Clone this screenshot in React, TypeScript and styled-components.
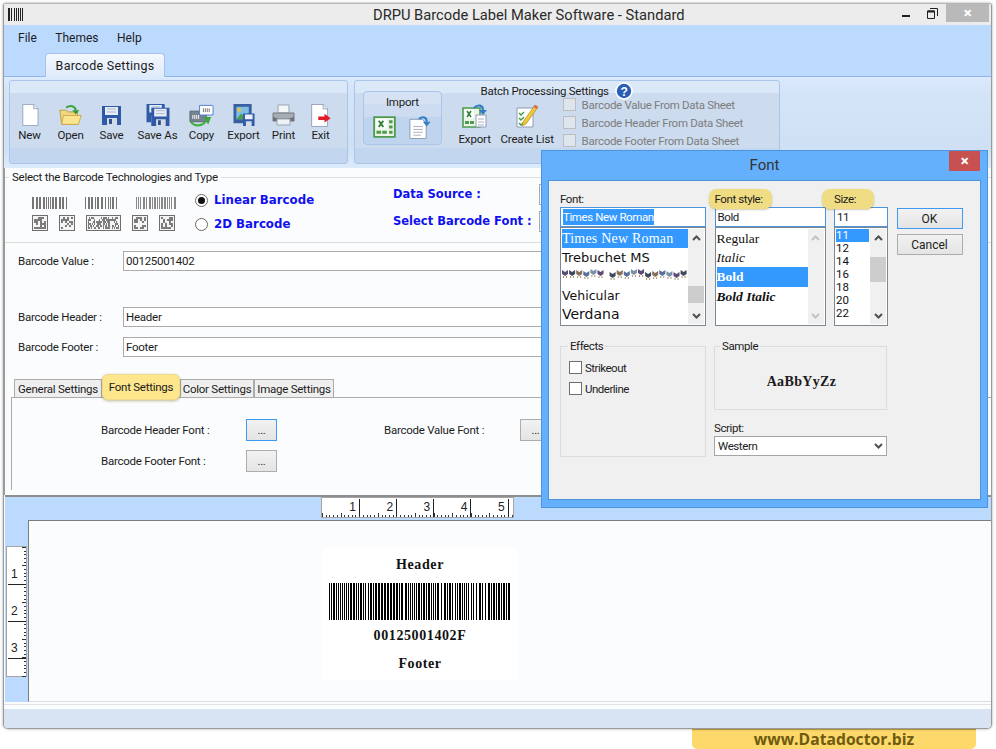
import React from "react";
import styled, { createGlobalStyle } from "styled-components";

const UI = `Roboto, "Open Sans", sans-serif`;
const SERIF = `"Liberation Serif", serif`;
const WIDE = `"DejaVu Sans", sans-serif`;

const GlobalStyle = createGlobalStyle`
  html, body { margin: 0; padding: 0; background: #fff; }
  #root { width: 996px; height: 749px; overflow: hidden; }
  * { box-sizing: border-box; }
`;

const Page = styled.div`
  width: 996px;
  height: 749px;
  padding: 3px 4px 0 3px;
  font-family: ${UI};
  font-size: 11.5px;
  letter-spacing: -0.25px;
  color: #1c1c1c;
`;
const Window = styled.div`
  position: relative;
  width: 989px;
  height: 726px;
  display: flex;
  flex-direction: column;
  border: 1px solid #9a9a9a;
  border-top-color: #b5b5b5;
  border-radius: 3px 3px 5px 5px;
  background: #fbfcfe;
  box-shadow: 0 0 3px rgba(0, 0, 0, 0.35);
  overflow: hidden;
`;
const TitleBar = styled.div`
  height: 21px;
  flex: none;
  display: flex;
  align-items: center;
  padding-left: 4px;
  background: #ececec;
`;
const Title = styled.div`
  margin-left: 349px;
  font-size: 14.7px;
  letter-spacing: 0;
  color: #2a2a2a;
`;
const Controls = styled.div`
  margin-left: auto;
  display: flex;
  align-items: flex-start;
  height: 100%;
`;
const CtlButton = styled.div`
  width: 26px;
  height: 18px;
  display: flex;
  align-items: center;
  justify-content: center;
`;
const CloseCtl = styled.div`
  width: 43px;
  height: 18px;
  margin-left: 1px;
  margin-right: 2px;
  background: #b9b9b9;
  color: #fff;
  font-size: 15px;
  font-weight: 700;
  display: flex;
  align-items: center;
  justify-content: center;
`;
const Band = styled.div`
  height: 52px;
  flex: none;
  background: #bcd9fe;
  border-bottom: 1px solid #8fb5ea;
  position: relative;
`;
const MenuBar = styled.div`
  display: flex;
  gap: 18.5px;
  padding: 0 0 0 14px;
  font-size: 12px;
  letter-spacing: 0;
  height: 25px;
  align-items: center;
`;
const RibbonTab = styled.div`
  margin: 3px 0 0 41px;
  width: 120px;
  height: 24px;
  border: 1px solid #a9bff0;
  border-bottom: none;
  border-radius: 4px 4px 0 0;
  background: linear-gradient(#f4f8fe, #dfeafa);
  font-size: 12.5px;
  display: flex;
  align-items: center;
  justify-content: center;
  letter-spacing: 0.25px;
`;
const Ribbon = styled.div`
  height: 91px;
  flex: none;
  display: flex;
  gap: 6px;
  padding: 3px 0 4px 5px;
  background: linear-gradient(#dbeafc 0, #d5e5f8 14px, #cfe0f4 70px, #dcebfb 100%);
`;
const RibbonGroup = styled.div<{ $w: number }>`
  width: ${(p) => p.$w}px;
  height: 84px;
  flex: none;
  display: flex;
  border: 1px solid #a9c6ea;
  border-radius: 3px;
  background: linear-gradient(#dbe8f8 0 12px, #ccdbee 12px 67px, #c2d6ef 67px);
`;
const ToolRow = styled.div`
  display: flex;
  padding: 22px 0 0 0;
  margin-left: -1px;
`;
const Tool = styled.div<{ $w?: number; $gap?: number }>`
  width: ${(p) => (p.$w ? `${p.$w}px` : "auto")};
  display: flex;
  flex-direction: column;
  align-items: center;
  gap: ${(p) => p.$gap ?? 1}px;
  line-height: 15px;
  font-size: 11.5px;
  letter-spacing: -0.15px;
  white-space: nowrap;
`;
const IconSlot = styled.div`
  height: 24px;
  display: flex;
  align-items: center;
  justify-content: center;
`;
const ImportBox = styled.div`
  width: 79px;
  height: 54px;
  margin: 10px 0 0 8px;
  border: 1px solid #a9c6ea;
  border-radius: 4px;
  background: linear-gradient(#d4e2f3 0 12px, #cddcf0 12px 25px, #bfd4ee 25px);
  display: flex;
  flex-direction: column;
  align-items: center;
`;
const ImportLabel = styled.div`
  line-height: 20px;
`;
const ImportIcons = styled.div`
  display: flex;
  gap: 12px;
  margin-top: 4px;
`;
const Batch = styled.div`
  margin-left: 19px;
  width: 320px;
  display: flex;
  flex-direction: column;
`;
const BatchHead = styled.div`
  display: flex;
  align-items: center;
  gap: 6px;
  margin: 1px 0 0 20px;
  height: 18px;
`;
const BatchBody = styled.div`
  display: flex;
`;
const BatchTools = styled.div`
  display: flex;
  gap: 13px;
  padding-top: 4px;
  margin-right: 10px;
`;
const Checks = styled.div`
  display: flex;
  flex-direction: column;
  gap: 5px;
  margin-top: -2px;
`;
const GhostCheck = styled.div`
  display: flex;
  align-items: center;
  gap: 6px;
  height: 13px;
  color: #7d7d7d;
  letter-spacing: -0.3px;
  white-space: nowrap;
`;
const GhostBox = styled.span`
  width: 13px;
  height: 13px;
  border: 1px solid #bdbdbd;
  background: #dfe5ec;
`;
const Form = styled.div`
  height: 327px;
  flex: none;
  display: flex;
  flex-direction: column;
  border-left: 1px solid #9a9a9a;
  background: #fbfcfe;
`;
const TechSet = styled.fieldset`
  margin: 2px 0 0;
  padding: 0 0 0 27px;
  height: 73px;
  flex: none;
  border: 0;
  border-top: 1px solid #dcdcdc;
  border-bottom: 1px solid #dcdcdc;
  display: flex;
  position: relative;
`;
const TechLegend = styled.legend`
  padding: 0 3px;
  margin-left: -23px;
  line-height: 15px;
`;
const TechBody = styled.div`
  display: flex;
  align-items: flex-start;
`;
const Thumbs = styled.div`
  width: 146px;
  flex: none;
  display: flex;
  flex-direction: column;
  gap: 6px;
  margin-top: 12px;
`;
const ThumbRow = styled.div<{ $gap: number }>`
  display: flex;
  gap: ${(p) => p.$gap}px;
`;
const RadioCol = styled.div`
  margin: 8px 0 0 17px;
  width: 198px;
  flex: none;
  display: flex;
  flex-direction: column;
  gap: 10px;
`;
const RadioRow = styled.div`
  display: flex;
  align-items: center;
  gap: 6px;
  height: 14px;
  color: #1010ee;
  font-family: ${WIDE};
  font-weight: 700;
  font-size: 11.8px;
  letter-spacing: 0;
`;
const Radio = styled.span<{ $on?: boolean }>`
  width: 13px;
  height: 13px;
  border-radius: 50%;
  border: 1px solid #6b6b6b;
  background: #fff;
  display: flex;
  align-items: center;
  justify-content: center;
  &::after {
    content: "";
    width: 7px;
    height: 7px;
    border-radius: 50%;
    background: ${(p) => (p.$on ? "#111" : "transparent")};
  }
`;
const SourceCol = styled.div`
  display: flex;
  flex-direction: column;
  gap: 7px;
  margin-top: -1px;
`;
const SourceRow = styled.div`
  display: flex;
  align-items: center;
  height: 20px;
`;
const SourceLabel = styled.div`
  width: 146px;
  flex: none;
  color: #1010ee;
  font-family: ${WIDE};
  font-weight: 700;
  font-size: 11.5px;
  letter-spacing: 0;
`;
const Combo = styled.div`
  width: 240px;
  height: 21px;
  border: 1px solid #aaa;
  background: #fff;
`;
const FieldRows = styled.div`
  padding: 8px 0 0 13px;
  display: flex;
  flex-direction: column;
`;
const FieldRow = styled.div<{ $after: number }>`
  display: flex;
  align-items: center;
  height: 20px;
  margin-bottom: ${(p) => p.$after}px;
`;
const FieldLabel = styled.div`
  width: 105px;
  flex: none;
`;
const FieldInput = styled.input`
  width: 700px;
  height: 20px;
  border: 1px solid #ababab;
  background: #fff;
  padding: 0 2px;
  font: 11.5px ${UI};
  letter-spacing: -0.25px;
  color: #1c1c1c;
`;
const TabRow = styled.div`
  position: relative;
  display: flex;
  height: 19px;
  margin: 21px 0 0 9px;
  flex: none;
  align-items: flex-end;
`;
const SmallTab = styled.div<{ $w: number; $hot?: boolean }>`
  width: ${(p) => p.$w}px;
  height: ${(p) => (p.$hot ? 26 : 18)}px;
  margin-bottom: ${(p) => (p.$hot ? -3 : 0)}px;
  position: relative;
  z-index: ${(p) => (p.$hot ? 1 : 0)};
  display: flex;
  align-items: ${(p) => (p.$hot ? "flex-start" : "center")};
  padding-top: ${(p) => (p.$hot ? 5 : 0)}px;
  justify-content: center;
  white-space: nowrap;
  border: 1px solid ${(p) => (p.$hot ? "#f0d98a" : "#ababab")};
  border-bottom: ${(p) => (p.$hot ? "1px solid #f0d98a" : "none")};
  border-radius: ${(p) => (p.$hot ? "6px" : "0")};
  background: ${(p) => (p.$hot ? "#fde68c" : "#efefef")};
  box-shadow: ${(p) => (p.$hot ? "0 1px 3px rgba(120,100,20,.45)" : "none")};
`;
const TabPanel = styled.div`
  margin-left: 6px;
  height: 93px;
  flex: none;
  border-left: 1px solid #ababab;
  border-top: 1px solid #ababab;
  display: grid;
  grid-template-columns: 145px 138px 136px 1fr;
  grid-template-rows: 22px 22px;
  row-gap: 9px;
  padding: 21px 0 0 89px;
  align-items: center;
`;
const FontLabel = styled.div``;
const DotButton = styled.div<{ $focus?: boolean }>`
  width: 31px;
  height: 22px;
  border: 1px solid ${(p) => (p.$focus ? "#3c9af0" : "#adadad")};
  background: linear-gradient(#f2f2f2, #e4e4e4);
  display: flex;
  align-items: center;
  justify-content: center;
  font-size: 11px;
`;
const Preview = styled.div`
  flex: 1;
  display: grid;
  grid-template-columns: 23px 1fr;
  grid-template-rows: 23px 1fr;
  background: #bcd9fe;
  border-top: 2px solid #8d8d8d;
  margin-left: 1px;
`;
const TopRulerCell = styled.div`
  grid-column: 2;
  padding-left: 293px;
  line-height: 0;
`;
const SideRulerCell = styled.div`
  padding: 26px 0 0 1px;
  line-height: 0;
`;
const Canvas = styled.div`
  border-left: 1.5px solid #7d7d7d;
  border-top: 1.5px solid #7d7d7d;
  border-bottom: 1px solid #dedede;
  background: #fbfcfe;
  padding: 27px 0 0 293px;
`;
const LabelCard = styled.div`
  width: 196px;
  height: 132px;
  background: #fff;
  display: flex;
  flex-direction: column;
  align-items: center;
  font-family: ${SERIF};
  font-weight: 700;
  font-size: 14px;
  letter-spacing: 0.6px;
  color: #111;
`;
const CardLine = styled.div<{ $top: number }>`
  margin-top: ${(p) => p.$top}px;
  line-height: 16px;
`;
const CardBars = styled.div`
  margin-top: 10px;
  line-height: 0;
`;
const Divider = styled.div`
  height: 5px;
  flex: none;
  margin-top: 2px;
  border-top: 1px solid #e2e2e2;
  background: #fbfcfe;
`;
const Status = styled.div`
  height: 19px;
  flex: none;
  background: #d8e3f3;
`;
const Badge = styled.div`
  margin-left: 689px;
  width: 284px;
  height: 20px;
  background: #fcd96a;
  border-radius: 0 0 5px 5px;
  border-top: 1px solid #c9a63d;
  color: #6f5a10;
  font: 700 15.7px "Open Sans", sans-serif;
  letter-spacing: 0;
  line-height: 18px;
  text-align: center;
`;
const Dialog = styled.div`
  position: absolute;
  left: 537px;
  top: 146px;
  width: 447px;
  height: 358px;
  border: 1px solid #4d94dc;
  background: #64b0fd;
  padding: 29px 6px 7px 6px;
  z-index: 5;
`;
const DialogTitle = styled.div`
  position: absolute;
  left: 0;
  right: 0;
  top: 5px;
  text-align: center;
  font-size: 15px;
  letter-spacing: 0;
  color: #333;
`;
const DialogClose = styled.div`
  position: absolute;
  right: 7px;
  top: 0;
  width: 31px;
  height: 20px;
  background: #c75050;
  color: #fff;
  font-size: 15px;
  font-weight: 700;
  display: flex;
  align-items: center;
  justify-content: center;
`;
const DialogBody = styled.div`
  width: 100%;
  height: 100%;
  background: #f0f0f0;
  border: 1px solid #4d94dc;
  padding: 10px 0 0 11px;
  display: grid;
  grid-template-columns: 146px 111px 54px 66px;
  column-gap: 8.5px;
  grid-template-rows: 16px 20px 98px;
  align-content: start;
  letter-spacing: -0.4px;
`;
const DLabel = styled.div<{ $hot?: boolean; $ml?: number; $w?: number }>`
  position: relative;
  line-height: 16px;
  white-space: nowrap;
  z-index: 1;
  ${(p) =>
    p.$hot
      ? `
    margin: -2px 0 -2px ${p.$ml}px;
    width: ${p.$w}px;
    padding: 2px 0 2px ${-(p.$ml ?? 0)}px;
    background: #f0dc82;
    border-radius: 8px;
    box-shadow: 0 1px 2px rgba(120,100,20,.35);
  `
      : ""}
`;
const DInput = styled.div`
  height: 20px;
  border: 1px solid #4d94dc;
  background: #fff;
  padding-left: 2px;
  line-height: 18px;
`;
const Selected = styled.span`
  background: #3399ff;
  color: #fff;
  padding: 1px 0;
`;
const ListBox = styled.div`
  height: 99px;
  border: 1px solid #7d8891;
  background: #fff;
  display: flex;
  padding: 1px;
  overflow: hidden;
`;
const ListItems = styled.div`
  flex: 1;
  min-width: 0;
  display: flex;
  flex-direction: column;
`;
const ListItem = styled.div<{ $on?: boolean; $h: number; $font?: string; $size: number; $ls?: number; $w?: number; $b?: boolean; $i?: boolean }>`
  height: ${(p) => p.$h}px;
  line-height: ${(p) => p.$h}px;
  flex: none;
  width: ${(p) => (p.$w ? `${p.$w}px` : "100%")};
  font-family: ${(p) => p.$font ?? UI};
  font-size: ${(p) => p.$size}px;
  letter-spacing: ${(p) => p.$ls ?? 0}px;
  font-weight: ${(p) => (p.$b ? 700 : 400)};
  font-style: ${(p) => (p.$i ? "italic" : "normal")};
  background: ${(p) => (p.$on ? "#3399ff" : "transparent")};
  color: ${(p) => (p.$on ? "#fff" : "#111")};
  white-space: nowrap;
`;
const ScrollBar = styled.div`
  width: 16px;
  flex: none;
  background: #f0f0f0;
  display: flex;
  flex-direction: column;
  justify-content: space-between;
  align-items: center;
  position: relative;
  padding: 6px 0 5px;
`;
const Thumb = styled.div<{ $top: number; $h: number }>`
  position: absolute;
  left: 0;
  right: 0;
  top: ${(p) => p.$top}px;
  height: ${(p) => p.$h}px;
  background: #cdcdcd;
`;
const DialogButtons = styled.div`
  grid-column: 4;
  grid-row: 1 / span 3;
  padding-top: 17px;
  display: flex;
  flex-direction: column;
  gap: 5px;
  letter-spacing: 0;
`;
const DButton = styled.div<{ $def?: boolean }>`
  height: 21px;
  border: 1px solid ${(p) => (p.$def ? "#3c9af0" : "#adadad")};
  background: linear-gradient(#f2f2f2, #e4e4e4);
  display: flex;
  align-items: center;
  justify-content: center;
  font-size: 12px;
`;
const LowerRow = styled.div`
  grid-column: 1 / span 3;
  display: grid;
  grid-template-columns: 146px 173px;
  column-gap: 8px;
  margin-top: 13px;
`;
const GroupSet = styled.fieldset<{ $h: number; $pad: number }>`
  margin: 0;
  padding: 0 0 0 ${(p) => p.$pad}px;
  height: ${(p) => p.$h}px;
  border: 1px solid #dcdcdc;
  min-width: 0;
`;
const GroupLegend = styled.legend<{ $ml: number }>`
  padding: 0 2px;
  margin-left: ${(p) => p.$ml}px;
  line-height: 16px;
`;
const EffectRow = styled.div`
  display: flex;
  align-items: center;
  gap: 3px;
  height: 13px;
  margin-top: 8px;
  letter-spacing: -0.5px;
  &:first-of-type {
    margin-top: 7px;
  }
`;
const Box = styled.span`
  width: 13px;
  height: 13px;
  border: 1px solid #6e6e6e;
  background: #fff;
`;
const SampleText = styled.div`
  text-align: center;
  padding: 20px 0 0 2px;
  font: 700 14px ${SERIF};
  letter-spacing: 0.35px;
`;
const ScriptLabel = styled.div`
  line-height: 16px;
  margin-top: 10px;
`;
const ScriptCombo = styled.div`
  height: 20px;
  border: 1px solid #a5a5a5;
  background: #fff;
  display: flex;
  align-items: center;
  justify-content: space-between;
  padding: 0 3px;
`;

/* ---------- drawings ---------- */
function rng(seed: number) {
  let s = seed * 7919 + 13;
  return () => {
    s = (s * 9301 + 49297) % 233280;
    return s / 233280;
  };
}
function barPattern(seed: number, total: number, gapBias: number) {
  const out: { x: number; w: number }[] = [];
  const next = rng(seed);
  let x = 0;
  while (x < total) {
    const w = next() > 0.6 ? 2 : 1;
    out.push({ x, w: Math.min(w, total - x) });
    x += w + (next() > gapBias ? 2 : 1);
  }
  return out;
}
const Bars = ({ w, h, seed, color = "#000", gapBias = 0.7 }: { w: number; h: number; seed: number; color?: string; gapBias?: number }) => (
  <svg width={w} height={h} shapeRendering="crispEdges">
    {barPattern(seed, w, gapBias).map((b, i) => (
      <rect key={i} x={b.x} y={0} width={b.w} height={h} fill={color} />
    ))}
  </svg>
);
const Matrix = ({ w, h, seed, stacked }: { w: number; h: number; seed: number; stacked?: boolean }) => {
  const next = rng(seed);
  const cells: React.ReactNode[] = [];
  for (let y = 2; y < h - 2; y += 2)
    for (let x = 2; x < w - 2; x += stacked ? 1 : 2) {
      const on = next() > 0.42;
      if (on) cells.push(<rect key={`${x}-${y}`} x={x} y={y} width={stacked ? 1 : 2} height={2} fill="#7c7c7c" />);
    }
  return (
    <svg width={w} height={h} shapeRendering="crispEdges">
      <rect x={0.5} y={0.5} width={w - 1} height={h - 1} fill="#f4f4f4" stroke="#6f6f6f" />
      {cells}
    </svg>
  );
};
const PageShape = () => <path d="M1.5 .5h13l5 5v20h-18z" fill="#fff" stroke="#8f9bb5" />;
const PageFold = () => <path d="M14.5 .5v5h5" fill="#e9edf5" stroke="#8f9bb5" />;
const NewIcon = () => (
  <svg width="20" height="22" viewBox="0 0 20 26">
    <PageShape />
    <PageFold />
  </svg>
);
const OpenIcon = () => (
  <svg width="23" height="23" viewBox="0 0 26 24">
    <path d="M1 6h7l2 2h11v14H3z" fill="#f0d680" stroke="#b99a3a" />
    <path d="M5 12h20l-3 10H3z" fill="#fbe68f" stroke="#c9a845" />
    <path d="M8 3c5-3 10-2 11 3" fill="none" stroke="#3aa53a" strokeWidth="2.4" />
    <path d="M15 6h8l-4 5z" fill="#2f9c2f" />
  </svg>
);
const Floppy = ({ x = 0, y = 0 }: { x?: number; y?: number }) => (
  <g transform={`translate(${x} ${y})`}>
    <path d="M0 0h19v19H0z" fill="#2f5aa8" />
    <path d="M3 1h13v8H3z" fill="#e8edf6" />
    <path d="M5 3h9M5 6h9" stroke="#a9b7d3" />
    <path d="M5 12h10v7H5z" fill="#d5dbe6" />
    <path d="M7 13h3v5H7z" fill="#2f4f8f" />
  </g>
);
const SaveIcon = () => (
  <svg width="19" height="19" viewBox="0 0 19 19">
    <Floppy />
  </svg>
);
const SaveAsIcon = () => (
  <svg width="24" height="22" viewBox="0 0 24 23">
    <Floppy />
    <Floppy x={5} y={4} />
  </svg>
);
const CopyIcon = () => (
  <svg width="25" height="24" viewBox="0 0 26 24">
    <path d="M1 8h17v11H1z" fill="#77828f" stroke="#5b6672" />
    <path d="M4 12v4M6 12v4M8 12v4M10 12v4" stroke="#fff" />
    <path d="M11 2h13a1 1 0 0 1 1 1v9H11z" fill="#fff" stroke="#4f7fcf" />
    <path d="M15 5v4M17 5v4M19 5v4M21 5v4" stroke="#777" />
    <path d="M2 19c3 5 11 5 15 0" fill="none" stroke="#45b045" strokeWidth="2.4" />
    <path d="M15 14h8l-3 8z" fill="#3aa53a" />
  </svg>
);
const ExportIcon = () => (
  <svg width="22" height="22" viewBox="0 0 22 23">
    <path d="M0 0h19v20H0z" fill="#3a5f9f" />
    <path d="M3 3h13v13H3z" fill="#7cc0e8" />
    <path d="M3 16l5-6 4 4 4-5v7z" fill="#4d9d4d" />
    <circle cx="6" cy="6" r="2" fill="#f0c040" />
    <path d="M10 10h12v13H10z" fill="#2f5aa8" />
    <path d="M12 11h8v5h-8z" fill="#eef" />
    <path d="M13 18h6v5h-6z" fill="#d5dbe6" />
  </svg>
);
const PrintIcon = () => (
  <svg width="23" height="22" viewBox="0 0 23 22">
    <path d="M6 1h11v8H6z" fill="#f4f6fa" stroke="#9aa3ae" />
    <path d="M1 9h21v8H1z" fill="#a8adb3" stroke="#757b83" />
    <path d="M1 13c6 2 15 2 21 0v4H1z" fill="#6c7178" />
    <path d="M5 15h13v6H5z" fill="#eef1f6" stroke="#9aa3ae" />
  </svg>
);
const ExitIcon = () => (
  <svg width="23" height="23" viewBox="0 0 23 26">
    <PageShape />
    <PageFold />
    <path d="M9 14h7v-3l7 5-7 5v-3H9z" fill="#e01b24" />
  </svg>
);
const SheetIcon = () => (
  <svg width="23" height="22" viewBox="0 0 20 21" preserveAspectRatio="none">
    <path d="M1 1h18v19H1z" fill="#eaf5e6" stroke="#4f9a4f" strokeWidth="1.6" />
    <path d="M3 3h9v9H3z" fill="#fff" />
    <path d="M5 4.5l4 6M9 4.5l-4 6" stroke="#2f7f3a" strokeWidth="1.6" />
    <path d="M14 4h3v3h-3zM14 9h3v3h-3zM14 14h3v3h-3zM3 14h4v3H3zM8 14h4v3H8z" fill="#4f9a4f" />
  </svg>
);
const DocArrowIcon = () => (
  <svg width="23" height="23" viewBox="0 0 23 24">
    <path d="M1.5 3.5h13l4 4v16h-17z" fill="#fff" stroke="#8f9bb5" />
    <path d="M5 11h10M5 14h10M5 17h10M5 20h8" stroke="#a8afbd" />
    <path d="M11 3c4-3 8-2 8 3" fill="none" stroke="#2f7fc7" strokeWidth="2.2" />
    <path d="M15 6h8l-4 5z" fill="#2f7fc7" />
  </svg>
);
const BatchExportIcon = () => (
  <svg width="26" height="24" viewBox="0 0 26 24">
    <path d="M1 4h17v19H1z" fill="#eaf5e6" stroke="#4f9a4f" strokeWidth="1.6" />
    <path d="M3 6h9v8H3z" fill="#fff" />
    <path d="M5 7l4 6M9 7l-4 6" stroke="#2f7f3a" strokeWidth="1.6" />
    <path d="M3 17h4v3H3zM8 17h4v3H8z" fill="#4f9a4f" />
    <path d="M14 11h10v12H14z" fill="#fff" stroke="#8f9bb5" />
    <path d="M16 15h6M16 18h6M16 21h6" stroke="#a8afbd" />
    <path d="M12 4c4-4 9-3 9 2" fill="none" stroke="#2f7fc7" strokeWidth="2.2" />
    <path d="M17 6h8l-4 5z" fill="#2f7fc7" />
  </svg>
);
const ListIcon = () => (
  <svg width="23" height="24" viewBox="0 0 23 24">
    <path d="M1 4h16v19H1z" fill="#fff" stroke="#8f9bb5" />
    <path d="M3 9l2 2 3-3M3 14l2 2 3-3M3 19l2 2 3-3" fill="none" stroke="#3f9a3f" strokeWidth="1.4" />
    <path d="M19 1l3 2-12 17-4 2 1-4z" fill="#f0c83c" stroke="#a98a20" strokeWidth=".7" />
    <path d="M19 1l3 2-1.500 2-3-2z" fill="#d96a5a" />
  </svg>
);
const HelpIcon = () => (
  <svg width="18" height="18" viewBox="0 0 18 18">
    <circle cx="9" cy="9" r="8" fill="#2a5fb5" stroke="#fff" strokeWidth="1.6" />
    <text x="9" y="13.500" textAnchor="middle" fontSize="12" fontWeight="700" fill="#fff" fontFamily="Liberation Sans, sans-serif">?</text>
  </svg>
);
const Chevron = ({ up, color = "#505050" }: { up?: boolean; color?: string }) => (
  <svg width="9" height="6" viewBox="0 0 9 6">
    <path d={up ? "M1 5l3.500-3.500L8 5" : "M1 1l3.500 3.500L8 1"} fill="none" stroke={color} strokeWidth="2" />
  </svg>
);
const Butterflies = () => {
  const next = rng(17);
  return (
    <svg width="126" height="13" viewBox="0 0 126 13">
      {Array.from({ length: 17 }).map((_, i) => {
        const x = i * 7.1 + (i > 5 ? 5 : 0);
        const y = 2 + Math.round(next() * 3);
        const c = ["#5d4a78", "#3f4a5e", "#8a6f5a", "#5a6f9a", "#7a8fa8"][i % 5];
        return (
          <g key={i}>
            <path d={`M${x} ${y}l3 2 3-2v4l-3 2-3-2z`} fill={c} />
            <path d={`M${x + 1} ${y + 6}h1v2h-1zM${x + 4} ${y + 6}h1v2h-1z`} fill="#a98f70" />
          </g>
        );
      })}
    </svg>
  );
};
const TopRuler = () => {
  const ticks = Array.from({ length: 52 }, (_, i) => i);
  return (
    <svg width="193" height="21" viewBox="0 0 193 21" shapeRendering="crispEdges">
      <rect x={0.5} y={0.5} width={192} height={20} fill="#fff" stroke="#a5a5a5" />
      {ticks.map((i) => (
        <rect key={i} x={1 + i * 3.72} y={i % 5 === 0 ? 16 : 18} width={1} height={i % 5 === 0 ? 4 : 2} fill="#333" />
      ))}
      {[1, 2, 3, 4, 5].map((n) => (
        <React.Fragment key={n}>
          <rect x={n * 37.2 + 0.5} y={2} width={1} height={18} fill="#222" />
          <text x={n * 37.2 - 9} y={14} fontSize="12" fontFamily="Liberation Sans, sans-serif" fill="#222">{n}</text>
        </React.Fragment>
      ))}
    </svg>
  );
};
const SideRuler = () => {
  const ticks = Array.from({ length: 36 }, (_, i) => i);
  return (
    <svg width="21" height="131" viewBox="0 0 21 131" shapeRendering="crispEdges">
      <rect x={0.5} y={0.5} width={20} height={130} fill="#fff" stroke="#a5a5a5" />
      {ticks.map((i) => (
        <rect key={i} x={i % 5 === 0 ? 16 : 18} y={1 + i * 3.68} width={i % 5 === 0 ? 4 : 2} height={1} fill="#333" />
      ))}
      {[1, 2, 3].map((n) => (
        <React.Fragment key={n}>
          <rect x={2} y={n * 37 + 0.5} width={18} height={1} fill="#222" />
          <text x={5} y={n * 37 - 5} fontSize="12" fontFamily="Liberation Sans, sans-serif" fill="#222">{n}</text>
        </React.Fragment>
      ))}
    </svg>
  );
};

const tools: { label: string; w: number; icon: React.ReactNode }[] = [
  { label: "New", w: 41, icon: <NewIcon /> },
  { label: "Open", w: 41, icon: <OpenIcon /> },
  { label: "Save", w: 41, icon: <SaveIcon /> },
  { label: "Save As", w: 51, icon: <SaveAsIcon /> },
  { label: "Copy", w: 37, icon: <CopyIcon /> },
  { label: "Export", w: 47, icon: <ExportIcon /> },
  { label: "Print", w: 33, icon: <PrintIcon /> },
  { label: "Exit", w: 41, icon: <ExitIcon /> },
];

export default function App() {
  return (
    <Page>
      <GlobalStyle />
      <Window>
        <TitleBar>
          <Bars w={16} h={13} seed={3} color="#222" />
          <Title>DRPU Barcode Label Maker Software - Standard</Title>
          <Controls>
            <CtlButton>
              <svg width="10" height="10" viewBox="0 0 10 10"><path d="M1 8h8" stroke="#222" strokeWidth="2" /></svg>
            </CtlButton>
            <CtlButton>
              <svg width="11" height="11" viewBox="0 0 11 11"><path d="M3 .5h7.500V8M.5 3h7v7.500h-7z" fill="none" stroke="#222" /><path d="M.5 3.500h7" stroke="#222" strokeWidth="2" /></svg>
            </CtlButton>
            <CloseCtl>×</CloseCtl>
          </Controls>
        </TitleBar>
        <Band>
          <MenuBar>
            <span>File</span>
            <span>Themes</span>
            <span>Help</span>
          </MenuBar>
          <RibbonTab>Barcode Settings</RibbonTab>
        </Band>
        <Ribbon>
          <RibbonGroup $w={339}>
            <ToolRow>
              {tools.map((t) => (
                <Tool key={t.label} $w={t.w}>
                  <IconSlot>{t.icon}</IconSlot>
                  <span>{t.label}</span>
                </Tool>
              ))}
            </ToolRow>
          </RibbonGroup>
          <RibbonGroup $w={426}>
            <ImportBox>
              <ImportLabel>Import</ImportLabel>
              <ImportIcons>
                <SheetIcon />
                <DocArrowIcon />
              </ImportIcons>
            </ImportBox>
            <Batch>
              <BatchHead>
                Batch Processing Settings <HelpIcon />
              </BatchHead>
              <BatchBody>
                <BatchTools>
                  <Tool $w={28} $gap={4}><IconSlot><BatchExportIcon /></IconSlot><span>Export</span></Tool>
                  <Tool $w={51} $gap={4}><IconSlot><ListIcon /></IconSlot><span>Create List</span></Tool>
                </BatchTools>
                <Checks>
                  <GhostCheck><GhostBox />Barcode Value From Data Sheet</GhostCheck>
                  <GhostCheck><GhostBox />Barcode Header From Data Sheet</GhostCheck>
                  <GhostCheck><GhostBox />Barcode Footer From Data Sheet</GhostCheck>
                </Checks>
              </BatchBody>
            </Batch>
          </RibbonGroup>
        </Ribbon>
        <Form>
          <TechSet>
            <TechLegend>Select the Barcode Technologies and Type</TechLegend>
            <TechBody>
              <Thumbs>
                <ThumbRow $gap={17}>
                  <Bars w={36} h={12} seed={11} color="#777" />
                  <Bars w={34} h={12} seed={25} color="#777" />
                  <Bars w={40} h={12} seed={47} color="#888" />
                </ThumbRow>
                <ThumbRow $gap={11}>
                  <Matrix w={16} h={16} seed={5} />
                  <Matrix w={16} h={16} seed={9} />
                  <Matrix w={35} h={16} seed={13} stacked />
                  <Matrix w={16} h={16} seed={21} />
                  <Matrix w={16} h={16} seed={33} />
                </ThumbRow>
              </Thumbs>
              <RadioCol>
                <RadioRow><Radio $on />Linear Barcode</RadioRow>
                <RadioRow><Radio />2D Barcode</RadioRow>
              </RadioCol>
              <SourceCol>
                <SourceRow><SourceLabel>Data Source :</SourceLabel><Combo /></SourceRow>
                <SourceRow><SourceLabel>Select Barcode Font :</SourceLabel><Combo /></SourceRow>
              </SourceCol>
            </TechBody>
          </TechSet>
          <FieldRows>
            <FieldRow $after={36}>
              <FieldLabel>Barcode Value :</FieldLabel>
              <FieldInput readOnly value="00125001402" />
            </FieldRow>
            <FieldRow $after={10}>
              <FieldLabel>Barcode Header :</FieldLabel>
              <FieldInput readOnly value="Header" />
            </FieldRow>
            <FieldRow $after={0}>
              <FieldLabel>Barcode Footer :</FieldLabel>
              <FieldInput readOnly value="Footer" />
            </FieldRow>
          </FieldRows>
          <TabRow>
            <SmallTab $w={88}>General Settings</SmallTab>
            <SmallTab $w={78} $hot>Font Settings</SmallTab>
            <SmallTab $w={74}>Color Settings</SmallTab>
            <SmallTab $w={80}>Image Settings</SmallTab>
          </TabRow>
          <TabPanel>
            <FontLabel>Barcode Header Font :</FontLabel>
            <DotButton $focus>...</DotButton>
            <FontLabel>Barcode Value Font :</FontLabel>
            <DotButton>...</DotButton>
            <FontLabel>Barcode Footer Font :</FontLabel>
            <DotButton>...</DotButton>
          </TabPanel>
        </Form>
        <Preview>
          <TopRulerCell><TopRuler /></TopRulerCell>
          <SideRulerCell><SideRuler /></SideRulerCell>
          <Canvas>
            <LabelCard>
              <CardLine $top={9}>Header</CardLine>
              <CardBars><Bars w={182} h={37} seed={77} gapBias={0.85} /></CardBars>
              <CardLine $top={8}>00125001402F</CardLine>
              <CardLine $top={12}>Footer</CardLine>
            </LabelCard>
          </Canvas>
        </Preview>
        <Divider />
        <Status />
        <Dialog>
          <DialogTitle>Font</DialogTitle>
          <DialogClose>×</DialogClose>
          <DialogBody>
            <DLabel>Font:</DLabel>
            <DLabel $hot $ml={-6} $w={63}>Font style:</DLabel>
            <DLabel $hot $ml={-12} $w={52}>Size:</DLabel>
            <DialogButtons>
              <DButton $def>OK</DButton>
              <DButton>Cancel</DButton>
            </DialogButtons>
            <DInput><Selected>Times New Roman</Selected></DInput>
            <DInput>Bold</DInput>
            <DInput>11</DInput>
            <ListBox>
              <ListItems>
                <ListItem $on $h={19} $font={SERIF} $size={14} $ls={0.2}>Times New Roman</ListItem>
                <ListItem $h={19} $font={WIDE} $size={13}>Trebuchet MS</ListItem>
                <ListItem $h={19} $size={11}><Butterflies /></ListItem>
                <ListItem $h={19} $font={WIDE} $size={12.500}>Vehicular</ListItem>
                <ListItem $h={19} $font={WIDE} $size={14}>Verdana</ListItem>
              </ListItems>
              <ScrollBar>
                <Chevron up />
                <Thumb $top={57} $h={17} />
                <Chevron />
              </ScrollBar>
            </ListBox>
            <ListBox>
              <ListItems>
                <ListItem $h={19} $font={SERIF} $size={13.500}>Regular</ListItem>
                <ListItem $h={19} $font={SERIF} $size={13.500} $i>Italic</ListItem>
                <ListItem $on $h={20} $font={SERIF} $size={13.500} $b>Bold</ListItem>
                <ListItem $h={19} $font={SERIF} $size={13.500} $b $i>Bold Italic</ListItem>
              </ListItems>
              <ScrollBar>
                <Chevron up color="#c4c4c4" />
                <Chevron color="#c4c4c4" />
              </ScrollBar>
            </ListBox>
            <ListBox>
              <ListItems>
                <ListItem $on $h={13} $size={11.500} $w={33}>11</ListItem>
                {[12, 14, 16, 18, 20, 22].map((n) => (
                  <ListItem key={n} $h={13} $size={11.500}>{n}</ListItem>
                ))}
              </ListItems>
              <ScrollBar>
                <Chevron up />
                <Thumb $top={28} $h={25} />
                <Chevron />
              </ScrollBar>
            </ListBox>
            <LowerRow>
              <GroupSet $h={119} $pad={8}>
                <GroupLegend $ml={-1}>Effects</GroupLegend>
                <EffectRow><Box />Strikeout</EffectRow>
                <EffectRow><Box />Underline</EffectRow>
              </GroupSet>
              <div>
                <GroupSet $h={72} $pad={0}>
                  <GroupLegend $ml={5}>Sample</GroupLegend>
                  <SampleText>AaBbYyZz</SampleText>
                </GroupSet>
                <ScriptLabel>Script:</ScriptLabel>
                <ScriptCombo>Western<Chevron /></ScriptCombo>
              </div>
            </LowerRow>
          </DialogBody>
        </Dialog>
      </Window>
      <Badge>www.Datadoctor.biz</Badge>
    </Page>
  );
}
